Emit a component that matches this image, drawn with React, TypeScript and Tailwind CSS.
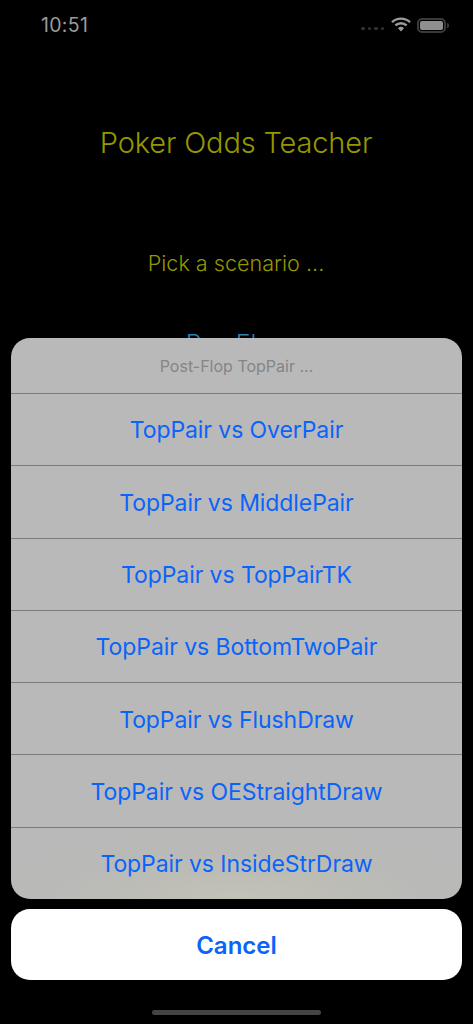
import React from "react";

const rows = [
  "TopPair vs OverPair",
  "TopPair vs MiddlePair",
  "TopPair vs TopPairTK",
  "TopPair vs BottomTwoPair",
  "TopPair vs FlushDraw",
  "TopPair vs OEStraightDraw",
  "TopPair vs InsideStrDraw",
];

export default function App() {
  return (
    <div className="relative w-[473px] h-[1024px] overflow-hidden bg-black font-['Inter',sans-serif]">
      {/* status bar */}
      <div className="flex items-center justify-between h-[50px] pl-[41px] pr-[24px] pt-[1px]">
        <span className="text-[19.5px] font-normal leading-none tracking-[0.3px] text-[#9a9a9a]">10:51</span>
        <div className="flex items-center">
          <div className="flex gap-[3px] mt-[6px] mr-[7px]">
            {[0, 1, 2, 3].map((i) => (
              <span key={i} className="w-[3.5px] h-[3.5px] rounded-full bg-[#333333]" />
            ))}
          </div>
          <svg width="20" height="15" viewBox="0 0 20 15" className="mr-[6px] mb-[3px]">
            <path d="M1 5.2 A13 13 0 0 1 19 5.2" fill="none" stroke="#9c9c9c" strokeWidth="2.4" />
            <path d="M4.4 8.4 A8.2 8.2 0 0 1 15.6 8.4" fill="none" stroke="#9c9c9c" strokeWidth="2.4" />
            <path d="M7 11.2 A4.4 4.4 0 0 1 13 11.2 L10 14.4 Z" fill="#9c9c9c" />
          </svg>
          <div className="w-[29px] h-[15px] rounded-[5px] border-2 border-[#3a3a3a] p-[1px] mb-[1px]">
            <div className="w-full h-full rounded-[2px] bg-[#8f8f8f]" />
          </div>
          <div className="w-[2px] h-[5px] rounded-r-full bg-[#3a3a3a] ml-[1px]" />
        </div>
      </div>

      {/* page behind the sheet */}
      <div className="flex flex-col items-center pr-[1px]">
        <h1 className="mt-[73px] text-[29px] leading-[40px] font-light tracking-[-0.15px] text-[#959700]">Poker Odds Teacher</h1>
        <p className="mt-[80px] text-[21.6px] leading-[40px] font-light text-[#959700]">Pick a scenario ...</p>
        <p className="mt-[41px] text-[25px] leading-[40px] font-light text-[#2f7fb0]">Pre-Flop</p>
      </div>

      {/* action sheet */}
      <div className="absolute left-[11px] right-[11px] top-[338px] flex flex-col gap-[10px]">
        <div className="rounded-[19px] overflow-hidden bg-[radial-gradient(ellipse_60%_12%_at_50%_100%,#c2c2b6_0%,#b9b9b7_70%,#b9b9b9_100%)]">
          <div className="h-[55px] flex items-center justify-center text-[16px] text-[#858585]">Post-Flop TopPair ...</div>
          {rows.map((r) => (
            <div
              key={r}
              className="h-[72.3px] pt-[2px] flex items-center justify-center border-t border-[#7b7b7b] text-[23px] font-normal tracking-[-0.08px] text-[#0a64fa]"
            >
              {r}
            </div>
          ))}
        </div>
        <div className="h-[71px] pt-[2px] rounded-[19px] bg-white flex items-center justify-center text-[24px] font-semibold text-[#0a64fa]">
          Cancel
        </div>
      </div>

      {/* home indicator */}
      <div className="absolute left-[152px] bottom-[9px] w-[169px] h-[5px] rounded-full bg-[#444444]" />
    </div>
  );
}
